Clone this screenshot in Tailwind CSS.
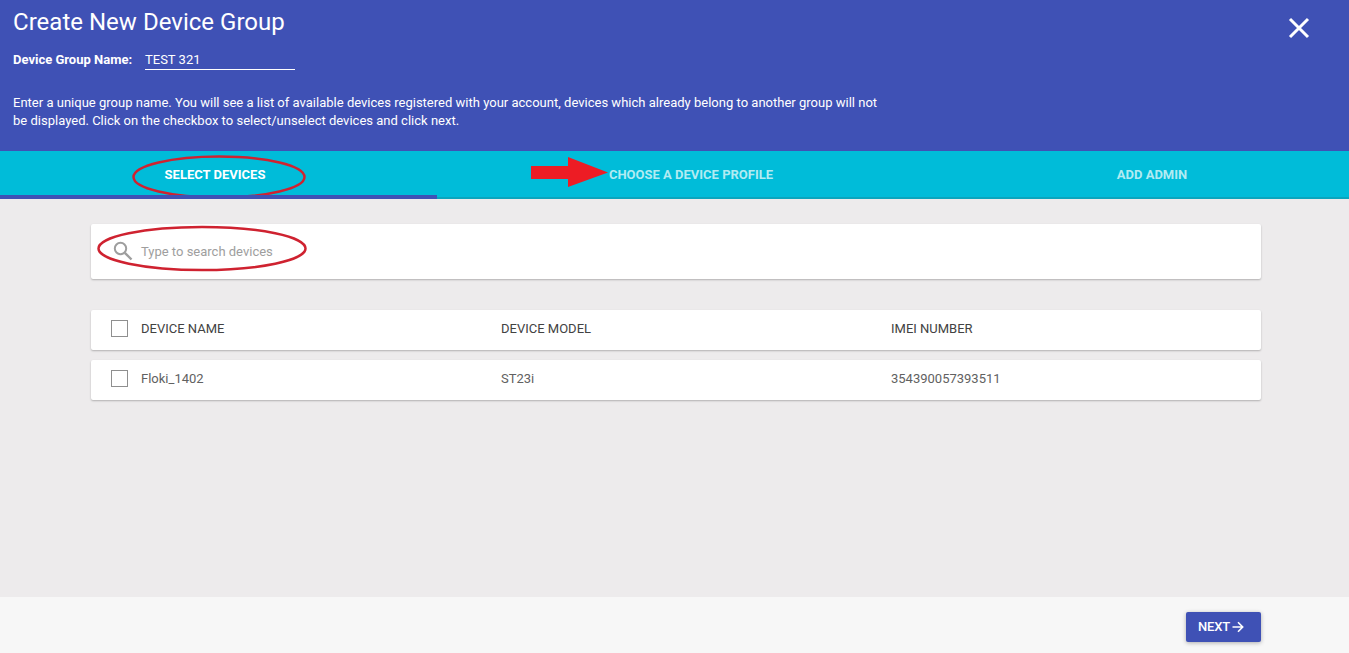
<!DOCTYPE html>
<html>
<head>
<meta charset="utf-8">
<script src="https://cdn.jsdelivr.net/npm/@tailwindcss/browser@4"></script>
</head>
<body class="bg-[#edebec]">
<div class="w-[1349px] h-[653px] flex flex-col overflow-hidden font-['Roboto',sans-serif]">
  <header class="h-[151px] bg-[#3f51b5] text-white relative pl-[13px] shrink-0">
    <h1 class="text-[24px] leading-[28px] pt-[8px] font-normal tracking-[0.02px]">Create New Device Group</h1>
    <div class="flex items-start mt-[10px] h-[27px]">
      <span class="text-[13px] font-bold leading-[32px] w-[132px] h-[27px] -mt-[2px]">Device Group Name:</span>
      <div class="w-[150px] h-[26px] border-b border-white text-[13px] leading-[32px] -mt-[2px]">TEST 321</div>
    </div>
    <p class="text-[13px] leading-[18px] w-[880px] mt-[21px] tracking-[0.01px]">Enter a unique group name. You will see a list of available devices registered with your account, devices which already belong to another group will not be displayed. Click on the checkbox to select/unselect devices and click next.</p>
    <svg class="absolute left-[1288px] top-[17px]" width="22" height="22" viewBox="0 0 22 22" fill="none" stroke="#fff" stroke-width="3"><path d="M2 2 L20 20 M20 2 L2 20"/></svg>
  </header>
  <nav class="h-[48px] bg-[#00bcd9] shrink-0 grid grid-cols-[437px_508px_404px] relative border-b-2 border-[#0aa5bd]">
    <div class="flex items-center justify-center h-[48px] border-b-4 border-[#3f51b5] text-white text-[13px] font-bold pr-[7px] pt-[4px] relative z-10">SELECT DEVICES</div>
    <div class="flex items-center justify-center text-[#b2ebf2] text-[13px] font-bold pt-[2px] h-[46px]">CHOOSE A DEVICE PROFILE</div>
    <div class="flex items-center justify-center text-[#b2ebf2] text-[13px] font-bold pl-[10px] pt-[2px] h-[46px]">ADD ADMIN</div>
    <svg class="absolute left-[129px] top-[3px]" width="180" height="46" viewBox="0 0 180 46" fill="none" stroke="#cf2230" stroke-width="2.5"><ellipse cx="90" cy="23" rx="85.5" ry="20.5"/></svg>
    <svg class="absolute left-[530px] top-[6px]" width="80" height="32" viewBox="0 0 80 32" fill="#ed1c24"><path d="M1 9 H38 V0 L78 15.5 L38 30 V22 H1 Z"/></svg>
  </nav>
  <main class="flex-1 pl-[91px] pr-[88px] pt-[25px]">
    <div class="relative h-[55px] bg-white rounded-[2px] shadow-[0_1px_2px_rgba(0,0,0,0.25)] flex items-center pl-[22px]">
      <svg class="-mt-[1px]" width="20" height="20" viewBox="0 0 20 20" fill="none" stroke="#9e9e9e" stroke-width="2"><circle cx="7.5" cy="7.5" r="5.7"/><path d="M11.8 11.8 L18.5 18.5" stroke-width="2.4"/></svg>
      <span class="ml-[8px] text-[13px] text-[#9e9e9e]">Type to search devices</span>
      <svg class="absolute left-[6px] top-[0px]" width="212" height="50" viewBox="0 0 212 50" fill="none" stroke="#cf2230" stroke-width="2.5"><ellipse cx="105" cy="24.5" rx="103.5" ry="21.5"/></svg>
    </div>
    <div class="mt-[31px] h-[40px] bg-white rounded-[2px] shadow-[0_1px_2px_rgba(0,0,0,0.25)] flex items-center text-[13px] text-[#424242]">
      <span class="ml-[20px] w-[17px] h-[17px] border border-[#8f8f8f] shrink-0 box-border -mt-[3px]"></span>
      <span class="ml-[13px] w-[360px] -mt-[2px]">DEVICE NAME</span>
      <span class="w-[390px] -mt-[2px]">DEVICE MODEL</span>
      <span class="-mt-[2px]">IMEI NUMBER</span>
    </div>
    <div class="mt-[10px] h-[40px] bg-white rounded-[2px] shadow-[0_1px_2px_rgba(0,0,0,0.25)] flex items-center text-[13px] text-[#616161]">
      <span class="ml-[20px] w-[17px] h-[17px] border border-[#8f8f8f] shrink-0 box-border -mt-[3px]"></span>
      <span class="ml-[13px] w-[360px] -mt-[2px]">Floki_1402</span>
      <span class="w-[390px] -mt-[2px]">ST23i</span>
      <span class="-mt-[2px]">354390057393511</span>
    </div>
  </main>
  <footer class="h-[56px] bg-[#f7f7f7] shrink-0 flex justify-end pr-[88px] pt-[15px]">
    <button class="w-[75px] h-[30px] bg-[#3f51b5] rounded-[2px] text-white text-[13px] font-medium tracking-[-0.2px] shadow-[0_1px_4px_rgba(0,0,0,0.3)] flex items-center pl-[12px] gap-[2px]">NEXT<svg width="12" height="12" viewBox="0 0 12 12" fill="none" stroke="#fff" stroke-width="1.6"><path d="M0.5 6 H10.5 M6 1.3 L10.7 6 L6 10.7"/></svg></button>
  </footer>
</div>
</body>
</html>
